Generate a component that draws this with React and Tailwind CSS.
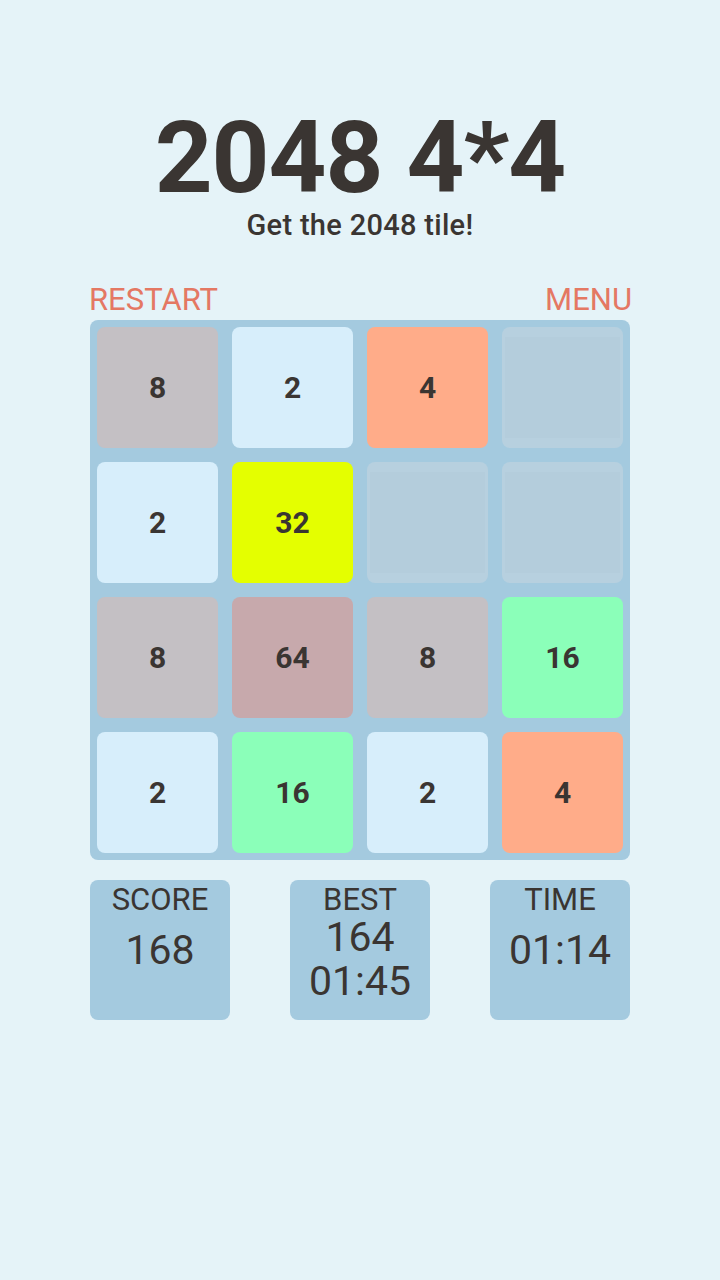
const tiles = [
  [8, 2, 4, 0],
  [2, 32, 0, 0],
  [8, 64, 8, 16],
  [2, 16, 2, 4],
]

const tileColor = {
  0: 'bg-[#b5cedd]',
  2: 'bg-[#d7eefb]',
  4: 'bg-[#ffac89]',
  8: 'bg-[#c4c0c4]',
  16: 'bg-[#8bffb9]',
  32: 'bg-[#e4ff00]',
  64: 'bg-[#c7a9ac]',
}

function Tile({ value }) {
  if (!value) {
    // empty slot has a faint lighter band along the top and bottom
    return (
      <div className="w-[121px] h-[121px] rounded-[8px] bg-[#b7d0df] p-[3px] pt-[10px] pb-[10px]">
        <div className="w-full h-full bg-[#b4cddc]" />
      </div>
    )
  }
  return (
    <div className={`w-[121px] h-[121px] rounded-[8px] flex items-center justify-center ${tileColor[value]}`}>
      <span className="text-[30px] font-bold text-[#3a3532]">{value}</span>
    </div>
  )
}

function StatBox({ label, children }) {
  return (
    <div className="w-[140px] h-[140px] rounded-[8px] bg-[#a4cadf] flex flex-col items-center pt-[4px] text-[#3a3532]">
      <div className="text-[31px] leading-[32px]">{label}</div>
      {children}
    </div>
  )
}

export default function App() {
  return (
    <div className="min-h-[1280px] w-[720px] bg-[#e5f3f8] flex flex-col items-center" style={{ fontFamily: 'Roboto, "Noto Sans", sans-serif' }}>
      <h1 className="mt-[108px] text-[101px] leading-[100px] font-bold text-[#3a3532] tracking-[-1px]">2048 4*4</h1>
      <p className="text-[29px] leading-[34px] font-medium text-[#3a3532] tracking-[0.3px]">Get the 2048 tile!</p>

      <div className="mt-[40px] w-[544px] flex justify-between text-[31px] leading-[36px] text-[#e47863] pl-[1px]">
        <span>RESTART</span>
        <span>MENU</span>
      </div>

      <div className="mt-[2px] w-[540px] h-[540px] rounded-[8px] bg-[#a4cadf] p-[7px] grid grid-cols-4 gap-[14px]">
        {tiles.flat().map((v, i) => (
          <Tile key={i} value={v} />
        ))}
      </div>

      <div className="mt-[20px] w-[540px] flex justify-between">
        <StatBox label="SCORE">
          <div className="mt-[10px] text-[41px] leading-[48px]">168</div>
        </StatBox>
        <StatBox label="BEST">
          <div className="text-[41px] leading-[42px]">164</div>
          <div className="text-[41px] leading-[46px]">01:45</div>
        </StatBox>
        <StatBox label="TIME">
          <div className="mt-[10px] text-[41px] leading-[48px]">01:14</div>
        </StatBox>
      </div>
    </div>
  )
}
